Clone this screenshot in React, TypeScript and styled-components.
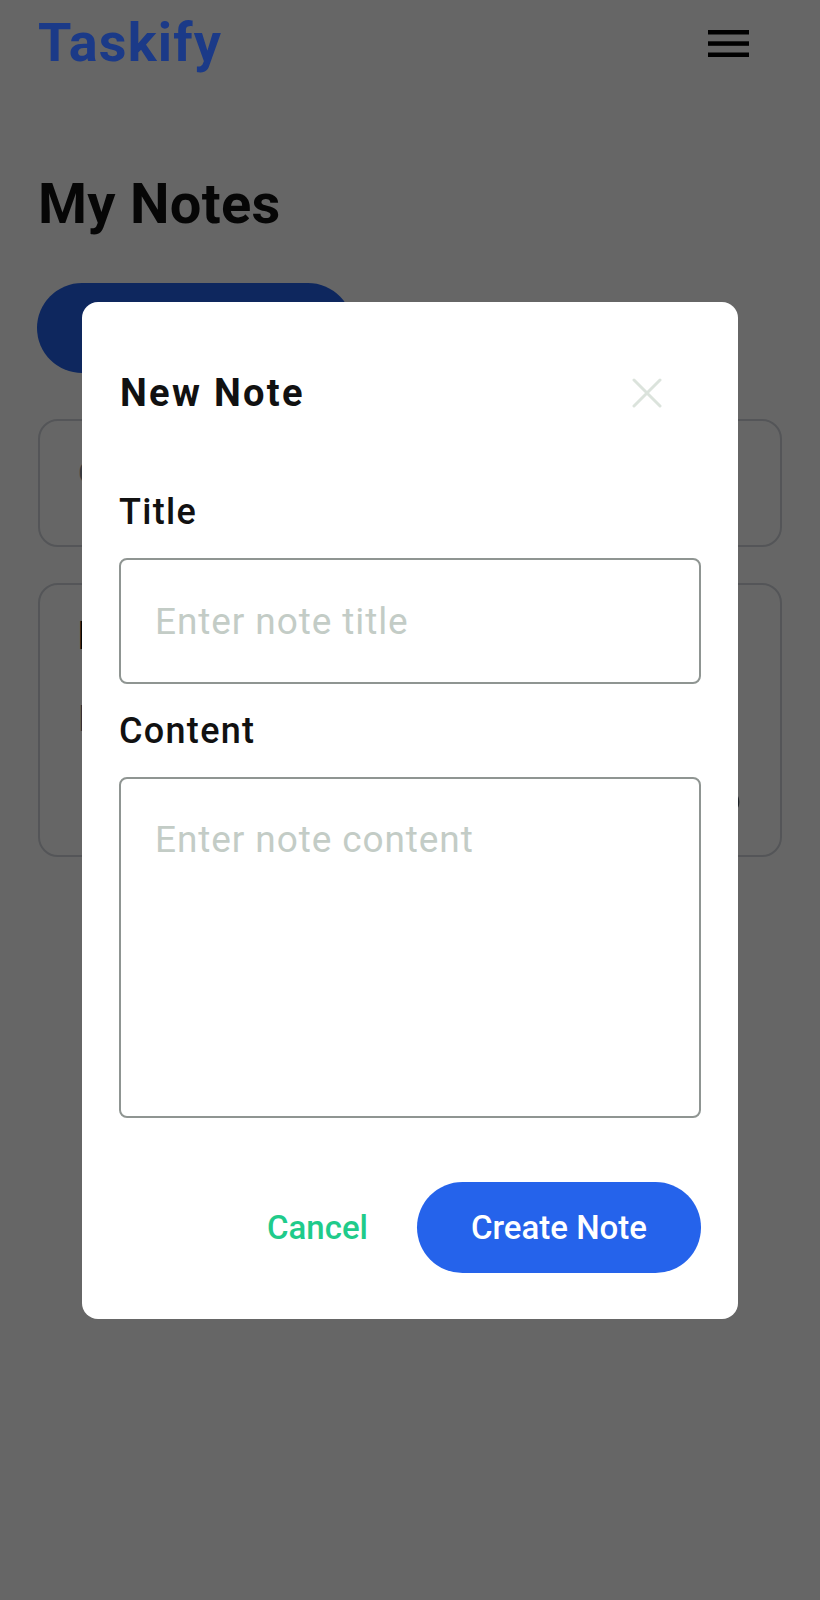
import React from "react";
import styled, { createGlobalStyle } from "styled-components";

const GlobalStyle = createGlobalStyle`
  html, body {
    margin: 0;
    padding: 0;
    background: #ffffff;
    font-family: Roboto, "Noto Sans", Arial, sans-serif;
  }
  * { box-sizing: border-box; }
`;

const Page = styled.div`
  min-height: 1600px;
  background: #ffffff;
`;

const Header = styled.header`
  position: relative;
  z-index: 20;
  display: flex;
  align-items: center;
  justify-content: space-between;
  padding: 11px 71px 0 38px;
`;

const Logo = styled.div`
  font-size: 54px;
  line-height: 64px;
  font-weight: 700;
  letter-spacing: 1.2px;
  color: #1b3a88;
`;

const MenuButton = styled.button`
  display: flex;
  padding: 0;
  border: none;
  background: transparent;
`;

const Main = styled.main`
  padding: 96px 38px 0;
  display: flex;
  flex-direction: column;
  align-items: flex-start;
`;

const PageTitle = styled.h1`
  margin: 0;
  font-size: 56px;
  line-height: 66px;
  font-weight: 700;
  letter-spacing: 0.3px;
  color: #111111;
`;

const AddButton = styled.button`
  margin: 46px 0 0 -1px;
  width: 316px;
  height: 90px;
  border: none;
  border-radius: 45px;
  background: #2563eb;
  color: #ffffff;
  font-family: inherit;
  font-size: 33px;
  font-weight: 500;
`;

const CardList = styled.div`
  margin-top: 46px;
  width: 100%;
  display: flex;
  flex-direction: column;
  gap: 36px;
`;

const Card = styled.div<{ $pad: string }>`
  border: 2px solid #d1d5db;
  border-radius: 20px;
  background: #ffffff;
  padding: ${(p) => p.$pad};
  display: flex;
  flex-direction: column;
`;

const CardHint = styled.div`
  font-size: 30px;
  line-height: 36px;
  color: #8b919b;
`;

const NoteTitle = styled.div`
  font-size: 38px;
  line-height: 46px;
  font-weight: 700;
  color: #111111;
`;

const NoteBody = styled.div`
  margin-top: 38px;
  font-size: 36px;
  line-height: 44px;
  color: #6b7280;
`;

const NoteFooter = styled.div`
  margin-top: 43px;
  height: 36px;
  display: flex;
  align-items: center;
  justify-content: flex-end;
`;

const Icons = styled.div`
  display: flex;
  gap: 20px;
  color: #4b5563;
`;

const Overlay = styled.div`
  position: fixed;
  inset: 0;
  z-index: 10;
  background: rgba(0, 0, 0, 0.6);
  display: flex;
  justify-content: center;
  align-items: flex-start;
  padding-top: 302px;
`;

const Modal = styled.div`
  position: relative;
  z-index: 30;
  width: 656px;
  background: #ffffff;
  border-radius: 16px;
  padding: 69px 37px 46px;
  display: flex;
  flex-direction: column;
`;

const ModalHeader = styled.div`
  height: 44px;
  display: flex;
  align-items: center;
  justify-content: space-between;
  margin-bottom: 76px;
`;

const ModalTitle = styled.h2`
  margin: 0;
  font-size: 38px;
  line-height: 44px;
  font-weight: 700;
  letter-spacing: 2.3px;
  color: #111111;
  padding-left: 1px;
`;

const CloseButton = styled.button`
  display: flex;
  padding: 0;
  margin-right: 39px;
  border: none;
  background: transparent;
`;

const Label = styled.label`
  display: block;
  font-size: 36px;
  line-height: 42px;
  font-weight: 500;
  letter-spacing: 1.3px;
  color: #111111;
  margin-bottom: 25px;
`;

const fieldBase = `
  width: 100%;
  border: 2px solid #8f9592;
  border-radius: 8px;
  background: #ffffff;
  font-family: Roboto, "Noto Sans", Arial, sans-serif;
  font-size: 37px;
  letter-spacing: 0.9px;
  color: #111111;
  outline: none;
  &::placeholder { color: #c3ccc6; }
`;

const TextInput = styled.input`
  ${fieldBase}
  height: 126px;
  padding: 0 34px;
  margin-bottom: 26px;
`;

const TextArea = styled.textarea`
  ${fieldBase}
  height: 341px;
  padding: 39px 34px;
  line-height: 44px;
  resize: none;
  display: block;
`;

const Actions = styled.div`
  margin-top: 64px;
  display: flex;
  justify-content: flex-end;
  align-items: center;
  gap: 25px;
`;

const TextButton = styled.button`
  border: none;
  background: transparent;
  padding: 0 24px;
  height: 91px;
  font-family: inherit;
  font-size: 33px;
  font-weight: 500;
  color: #1fcb8b;
`;

const PrimaryButton = styled.button`
  border: none;
  height: 91px;
  width: 284px;
  border-radius: 46px;
  background: #2563eb;
  color: #ffffff;
  font-family: inherit;
  font-size: 33px;
  font-weight: 500;
`;

const HamburgerIcon = () => (
  <svg width="41" height="27" viewBox="0 0 41 27" aria-hidden="true">
    <rect x="0" y="0" width="41" height="4.5" fill="#000" />
    <rect x="0" y="11.3" width="41" height="4.5" fill="#000" />
    <rect x="0" y="22.5" width="41" height="4.5" fill="#000" />
  </svg>
);

const CloseIcon = () => (
  <svg width="30" height="30" viewBox="0 0 30 30" aria-hidden="true">
    <path d="M2 2 L28 28 M28 2 L2 28" stroke="#dbe3dc" strokeWidth="3" strokeLinecap="round" />
  </svg>
);

const SmallIcon = () => (
  <svg width="32" height="32" viewBox="0 0 24 24" fill="none" stroke="currentColor" strokeWidth="2" strokeLinecap="round" strokeLinejoin="round" aria-hidden="true">
    <circle cx="12" cy="12" r="9" />
  </svg>
);

export default function App() {
  return (
    <>
      <GlobalStyle />
      <Page>
        <Header>
          <Logo>Taskify</Logo>
          <MenuButton aria-label="Menu">
            <HamburgerIcon />
          </MenuButton>
        </Header>
        <Main>
          <PageTitle>My Notes</PageTitle>
          <AddButton>+ New Note</AddButton>
          <CardList>
            <Card $pad="34px 38px 54px">
              <CardHint>Categories</CardHint>
            </Card>
            <Card $pad="28px 38px 35px">
              <NoteTitle>My first note</NoteTitle>
              <NoteBody>Notes are saved here.</NoteBody>
              <NoteFooter>
                <Icons>
                  <SmallIcon />
                  <SmallIcon />
                </Icons>
              </NoteFooter>
            </Card>
          </CardList>
        </Main>
        <Overlay>
          <Modal>
            <ModalHeader>
              <ModalTitle>New Note</ModalTitle>
              <CloseButton aria-label="Close">
                <CloseIcon />
              </CloseButton>
            </ModalHeader>
            <Label htmlFor="note-title">Title</Label>
            <TextInput id="note-title" placeholder="Enter note title" />
            <Label htmlFor="note-content">Content</Label>
            <TextArea id="note-content" placeholder="Enter note content" />
            <Actions>
              <TextButton>Cancel</TextButton>
              <PrimaryButton>Create Note</PrimaryButton>
            </Actions>
          </Modal>
        </Overlay>
      </Page>
    </>
  );
}
